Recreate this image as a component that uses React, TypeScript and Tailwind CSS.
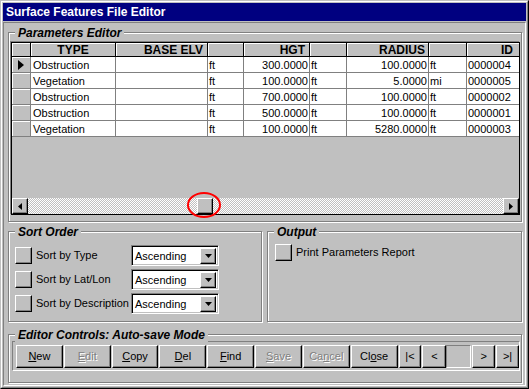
import React from "react";

const raised =
  "border border-t-white border-l-white border-r-black border-b-black shadow-[inset_-1px_-1px_0_#808080]";
const sunkenField =
  "border border-t-[#808080] border-l-[#808080] border-r-white border-b-white shadow-[inset_1px_1px_0_#000,inset_-1px_-1px_0_#c0c0c0]";
const etched = "border border-[#808080] shadow-[inset_1px_1px_0_#fff,1px_1px_0_#fff]";

function Group({
  label,
  className,
  children,
}: {
  label: string;
  className: string;
  children?: React.ReactNode;
}) {
  return (
    <div className={`relative ${etched} ${className}`}>
      <div className="absolute left-[6px] top-[-7px] px-[3px] bg-[#c0c0c0] text-[12px] font-bold italic leading-[14px] text-black whitespace-nowrap">
        {label}
      </div>
      {children}
    </div>
  );
}

const cols = [19, 85, 92, 36, 66, 37, 82, 38, 52];

const rows = [
  ["Obstruction", "", "ft", "300.0000", "ft", "100.0000", "ft", "0000004"],
  ["Vegetation", "", "ft", "100.0000", "ft", "5.0000", "mi", "0000005"],
  ["Obstruction", "", "ft", "700.0000", "ft", "100.0000", "ft", "0000002"],
  ["Obstruction", "", "ft", "500.0000", "ft", "100.0000", "ft", "0000001"],
  ["Vegetation", "", "ft", "100.0000", "ft", "5280.0000", "ft", "0000003"],
];

const rightCols = [3, 5];

function ArrowLeft() {
  return (
    <svg width="4" height="7" viewBox="0 0 4 7">
      <polygon points="4,0 4,7 0,3.5" fill="#000" />
    </svg>
  );
}
function ArrowRight() {
  return (
    <svg width="4" height="7" viewBox="0 0 4 7">
      <polygon points="0,0 0,7 4,3.5" fill="#000" />
    </svg>
  );
}
function ArrowDown() {
  return (
    <svg width="7" height="4" viewBox="0 0 7 4">
      <polygon points="0,0 7,0 3.5,4" fill="#000" />
    </svg>
  );
}

function DataGrid() {
  return (
    <div className="relative ml-[2px] mt-[9px] w-[509px] h-[173px] border border-black shadow-[-1px_-1px_0_#808080] bg-[#c0c0c0] flex flex-col">
      {/* header */}
      <div className="flex h-[14px] text-[12px] font-bold leading-[12px]">
        {[
          { t: "", a: "" },
          { t: "TYPE", a: "justify-center" },
          { t: "BASE ELV", a: "justify-end pr-[4px]" },
          { t: "", a: "" },
          { t: "HGT", a: "justify-end pr-[4px]" },
          { t: "", a: "" },
          { t: "RADIUS", a: "justify-end pr-[3px]" },
          { t: "", a: "" },
          { t: "ID", a: "justify-end pr-[6px]" },
        ].map((h, i) => (
          <div
            key={i}
            style={{ width: cols[i] }}
            className={`flex items-center h-full bg-[#c0c0c0] border-b border-black shadow-[inset_1px_1px_0_#fff] ${
              i < cols.length - 1 ? "border-r" : ""
            } ${h.a}`}
          >
            {h.t}
          </div>
        ))}
      </div>
      {rows.map((r, ri) => (
        <div key={ri} className="flex h-[16px] text-[11px] leading-[12px]">
          <div
            style={{ width: cols[0] }}
            className="flex items-center pl-[6px] h-full bg-[#c0c0c0] border-r border-b border-[#808080] shadow-[inset_1px_1px_0_#fff]"
          >
            {ri === 0 && (
              <svg width="7" height="10" viewBox="0 0 7 10">
                <polygon points="0,0 0,10 6,5" fill="#000" />
              </svg>
            )}
          </div>
          {r.map((c, ci) => {
            const i = ci + 1;
            const right = rightCols.includes(ci);
            return (
              <div
                key={ci}
                style={{ width: cols[i] }}
                className={`flex items-center h-full bg-white border-b border-[#808080] whitespace-nowrap overflow-hidden ${
                  i < cols.length - 1 ? "border-r" : ""
                } ${right ? "justify-end pr-[1px]" : ci === 0 ? "pl-[2px]" : "pl-[1px]"}`}
              >
                {c}
              </div>
            );
          })}
        </div>
      ))}
      <div className="flex-1" />
      {/* scrollbar */}
      <div className="flex h-[16px] bg-[repeating-conic-gradient(#c0c0c0_0_25%,#fff_0_50%)] bg-[length:2px_2px]">
        <div className={`w-[16px] h-[16px] bg-[#c0c0c0] flex items-center justify-center ${raised}`}>
          <ArrowLeft />
        </div>
        <div className="w-[169px]" />
        <div className={`w-[16px] h-[16px] bg-[#c0c0c0] ${raised}`} />
        <div className="flex-1" />
        <div className={`w-[16px] h-[16px] bg-[#c0c0c0] flex items-center justify-center ${raised}`}>
          <ArrowRight />
        </div>
      </div>
      {/* red highlight circle */}
      <div className="absolute left-[175px] top-[149px] w-[34px] h-[26px] rounded-[50%] border-2 border-[#ff0000]" />
    </div>
  );
}

function SqButton() {
  return <div className={`w-[17px] h-[17px] bg-[#c0c0c0] shrink-0 ${raised}`} />;
}

function SortRow({ label }: { label: string }) {
  return (
    <div className="flex items-center h-[21px]">
      <SqButton />
      <div className="ml-[4px] w-[95px] text-[11px] whitespace-nowrap">{label}</div>
      <div className={`w-[88px] h-[21px] bg-white flex items-center p-[2px] ${sunkenField}`}>
        <div className="flex-1 pl-[1px] text-[11px] leading-[12px]">Ascending</div>
        <div className={`w-[16px] h-[16px] bg-[#c0c0c0] flex items-center justify-center ${raised}`}>
          <ArrowDown />
        </div>
      </div>
    </div>
  );
}

function Btn({
  children,
  disabled,
  w = "w-[47px]",
}: {
  children: React.ReactNode;
  disabled?: boolean;
  w?: string;
}) {
  return (
    <div
      className={`${w} h-[23px] bg-[#c0c0c0] flex items-center justify-center text-[11px] ${raised} ${
        disabled ? "text-[#808080] [text-shadow:1px_1px_0_#fff]" : "text-black"
      }`}
    >
      {children}
    </div>
  );
}

export default function App() {
  return (
    <div className="w-[529px] h-[389px] font-['Liberation_Sans',Arial,sans-serif] text-black select-none">
      <div className="w-full h-full border border-t-[#c0c0c0] border-l-[#c0c0c0] border-r-black border-b-black">
        <div className="w-full h-full border border-t-white border-l-white border-r-[#808080] border-b-[#808080] bg-[#c0c0c0] p-[1px] flex flex-col">
          <div className="h-[18px] bg-[#000080] text-white text-[12px] font-bold leading-[18px] pl-[3px] whitespace-nowrap">
            Surface Features File Editor
          </div>
          <div className="mt-[1px] flex-1 border border-t-[#808080] border-l-[#808080] border-r-white border-b-white pl-[4px] pt-[9px]">
            <Group label="Parameters Editor" className="w-[514px] h-[190px]">
              <DataGrid />
            </Group>
            <div className="flex gap-[5px] mt-[9px]">
              <Group label="Sort Order" className="w-[254px] h-[91px]">
                <div className="pl-[6px] pt-[13px] flex flex-col gap-[3px]">
                  <SortRow label="Sort by Type" />
                  <SortRow label="Sort by Lat/Lon" />
                  <SortRow label="Sort by Description" />
                </div>
              </Group>
              <Group label="Output" className="w-[255px] h-[91px]">
                <div className="pl-[7px] pt-[12px] flex items-center">
                  <SqButton />
                  <div className="ml-[4px] text-[11px]">Print Parameters Report</div>
                </div>
              </Group>
            </div>
            <Group label="Editor Controls: Auto-save Mode" className="mt-[12px] w-[514px] h-[49px]">
              <div className="ml-[3px] mt-[6px] w-[508px] h-[30px] border border-t-[#808080] border-l-[#808080] border-r-white border-b-white pl-[3px] pt-[3px] flex gap-[1px]">
                <Btn>
                  <span className="underline">N</span>ew
                </Btn>
                <Btn disabled>
                  <span className="underline">E</span>dit
                </Btn>
                <Btn>
                  <span className="underline">C</span>opy
                </Btn>
                <Btn>
                  <span className="underline">D</span>el
                </Btn>
                <Btn>
                  <span className="underline">F</span>ind
                </Btn>
                <Btn disabled>
                  <span className="underline">S</span>ave
                </Btn>
                <Btn disabled>
                  Ca<span className="underline">n</span>cel
                </Btn>
                <Btn>
                  Cl<span className="underline">o</span>se
                </Btn>
                <Btn w="w-[23px]">|&lt;</Btn>
                <Btn w="w-[24px]">&lt;</Btn>
                <div className="w-[25px] h-[23px] border border-t-[#808080] border-l-[#808080] border-r-white border-b-white bg-[#c0c0c0] -ml-[1px]" />
                <Btn w="w-[23px]">&gt;</Btn>
                <Btn w="w-[23px]">&gt;|</Btn>
              </div>
            </Group>
          </div>
        </div>
      </div>
    </div>
  );
}
